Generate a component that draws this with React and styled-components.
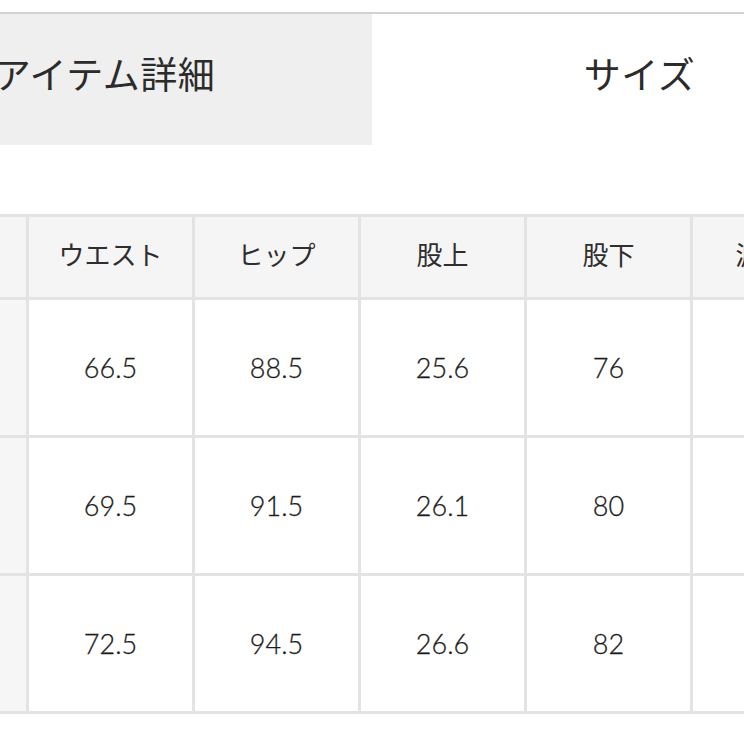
import React from "react";
import styled, { createGlobalStyle } from "styled-components";

const GlobalStyle = createGlobalStyle`
  html, body {
    margin: 0;
    padding: 0;
    background: #ffffff;
    overflow: hidden;
  }
  body {
    font-family: "Lato", "Noto Sans CJK JP", sans-serif;
    color: #2e2e2e;
  }
`;

const Page = styled.div`
  width: 744px;
  height: 744px;
  overflow: hidden;
  padding-top: 12px;
  box-sizing: border-box;
`;

// tab bar is wider than the window, both ends get clipped
const TabBar = styled.div`
  display: flex;
  width: 1070px;
  margin-left: -163px;
  border-top: 2px solid #d2d2d2;
`;

const Tab = styled.div`
  flex: 0 0 535px;
  height: 131px;
  display: flex;
  align-items: center;
  justify-content: center;
  padding-bottom: 14px;
  box-sizing: border-box;
  background: ${(p) => (p.active ? "#efefef" : "#ffffff")};
  font-family: "Noto Sans CJK JP", sans-serif;
  font-size: 37px;
  letter-spacing: 0.5px;
  color: #2b2b2b;
`;

const SizeTable = styled.div`
  display: inline-grid;
  margin-top: 69px;
  margin-left: -140px;
  grid-template-columns: repeat(6, 163px);
  grid-template-rows: 80px repeat(3, 135px);
  gap: 3px;
  padding: 3px;
  background: #e3e3e3;
`;

const Cell = styled.div`
  display: flex;
  align-items: center;
  justify-content: center;
  box-sizing: border-box;
  padding-bottom: ${(p) => (p.head ? "7px" : "0")};
  background: ${(p) => (p.head ? "#f5f5f5" : p.side ? "#f6f6f6" : "#ffffff")};
  font-size: ${(p) => (p.head ? "26px" : "27px")};
  font-weight: ${(p) => (p.head ? 400 : 300)};
  font-family: ${(p) =>
    p.head ? '"Noto Sans CJK JP", sans-serif' : '"Lato", "Noto Sans CJK JP", sans-serif'};
  color: ${(p) => (p.head ? "#2e2e2e" : "#1c1c1c")};
  -webkit-text-stroke: ${(p) => (p.head ? "0" : "0.3px")};
  white-space: nowrap;
`;

const headers = ["サイズ", "ウエスト", "ヒップ", "股上", "股下", "渡り幅"];

const rows = [
  ["S", "66.5", "88.5", "25.6", "76", "30.5"],
  ["M", "69.5", "91.5", "26.1", "80", "31.5"],
  ["L", "72.5", "94.5", "26.6", "82", "32.5"],
];

export default function App() {
  return (
    <>
      <GlobalStyle />
      <Page>
        <TabBar>
          <Tab active>アイテム詳細</Tab>
          <Tab>サイズ</Tab>
        </TabBar>
        <SizeTable>
          {headers.map((h) => (
            <Cell head key={h}>
              {h}
            </Cell>
          ))}
          {rows.map((r) =>
            r.map((v, i) => (
              <Cell side={i === 0} key={r[0] + i}>
                {v}
              </Cell>
            ))
          )}
        </SizeTable>
      </Page>
    </>
  );
}
